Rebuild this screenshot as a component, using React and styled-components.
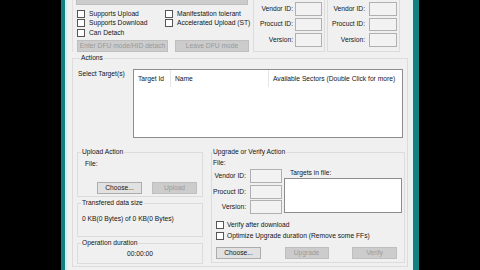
import React from 'react';
import styled, { createGlobalStyle } from 'styled-components';

const Global = createGlobalStyle`
  html, body { margin: 0; padding: 0; background: #000; }
  body { font-family: "Liberation Sans", Arial, sans-serif; }
`;

const Screen = styled.div`
  width: 480px;
  height: 270px;
  display: flex;
  overflow: hidden;
  background: #000;
`;

const Window = styled.div`
  margin-left: 61px;
  width: 358px;
  height: 270px;
  box-sizing: border-box;
  border-left: 4px solid #127f80;
  border-right: 6px solid #127f80;
  display: flex;
`;

const Frame = styled.div`
  flex: 1;
  border-left: 2px solid #d4ecec;
  border-right: 4px solid #e6f2f2;
  background: #f0f0f0;
  overflow: hidden;
  color: #141414;
  font-size: 6.7px;
  line-height: 8px;
`;

const Content = styled.div`
  margin-top: -14px;
  display: flex;
  flex-direction: column;
`;

const TopSection = styled.div`
  display: flex;
  height: 66px;
`;

const LeftPanel = styled.div`
  margin-left: 5px;
  width: 181px;
  box-sizing: border-box;
  border-left: 1px solid #e0e0e0;
  padding-left: 3px;
  display: flex;
  flex-direction: column;
`;

const Button = styled.button`
  box-sizing: border-box;
  width: ${p => p.$w}px;
  height: ${p => p.$h || 12}px;
  margin: 0;
  padding: 0;
  font-family: inherit;
  font-size: 6.7px;
  line-height: 8px;
  white-space: nowrap;
  overflow: hidden;
  border: 1px solid ${p => (p.disabled ? '#bfbfbf' : '#adadad')};
  background: ${p => (p.disabled ? '#cccccc' : '#e1e1e1')};
  color: ${p => (p.disabled ? '#9a9a9a' : '#141414')};
`;

const HiddenButton = styled(Button)`
  margin-top: 5px;
`;

const CheckGrid = styled.div`
  margin-top: 4px;
  padding-left: 1px;
  display: grid;
  grid-template-columns: 88px auto;
  grid-template-rows: repeat(3, 9.5px);
  grid-auto-flow: column;
`;

const CheckRow = styled.label`
  display: flex;
  align-items: center;
  gap: ${p => p.$gap || 4}px;
  white-space: nowrap;
  height: ${p => p.$h || 9.5}px;
`;

const Box = styled.span`
  display: inline-block;
  box-sizing: border-box;
  width: 8px;
  height: 8px;
  border: 1px solid #555;
  background: #fff;
  flex: none;
`;

const ButtonRow = styled.div`
  display: flex;
  gap: ${p => p.$gap || 0}px;
  justify-content: ${p => p.$justify || 'flex-start'};
  margin-top: ${p => p.$mt || 0}px;
  padding: ${p => p.$pad || '0'};
`;

const IdGroup = styled.div`
  box-sizing: border-box;
  width: ${p => p.$w}px;
  height: 66px;
  margin-left: ${p => p.$ml || 0}px;
  border: 1px solid #dcdcdc;
  padding: 15px 2px 0 1px;
  display: grid;
  grid-template-columns: ${p => p.$cols};
  column-gap: ${p => p.$cg}px;
  grid-auto-rows: 13.5px;
  row-gap: 2px;
  align-content: start;
`;

const FieldLabel = styled.span`
  text-align: right;
  align-self: center;
  white-space: nowrap;
`;

const Input = styled.span`
  display: block;
  box-sizing: border-box;
  border: 1px solid #b0b0b0;
  background: #f2f2f2;
`;

const Group = styled.fieldset`
  margin: ${p => p.$m || 0};
  padding: ${p => p.$pad || '0'};
  min-width: 0;
  box-sizing: border-box;
  border: 1px solid #dcdcdc;
  width: ${p => p.$w}px;
  height: ${p => p.$h}px;
  display: flex;
  flex-direction: column;
`;

const Legend = styled.legend`
  margin-left: ${p => p.$ml ?? 3}px;
  padding: 0 1px;
  font-size: 6.7px;
  line-height: 8px;
`;

const TargetRow = styled.div`
  display: flex;
  height: 69px;
`;

const TargetLabel = styled.div`
  width: 56px;
  box-sizing: border-box;
  padding: 1px 0 0 1px;
`;

const ListBox = styled.div`
  width: 270px;
  height: 69px;
  box-sizing: border-box;
  border: 1px solid #8c8c8c;
  background: #fff;
`;

const ListHeader = styled.div`
  display: flex;
  height: 17px;
`;

const HeaderCell = styled.div`
  box-sizing: border-box;
  width: ${p => (p.$w ? `${p.$w}px` : 'auto')};
  flex: ${p => (p.$w ? 'none' : '1')};
  display: flex;
  align-items: center;
  padding-left: 4px;
  border-right: ${p => (p.$last ? 'none' : '1px solid #e5e5e5')};
  white-space: nowrap;
`;

const BottomRow = styled.div`
  display: flex;
  gap: 8px;
  margin-top: 10px;
`;

const LeftCol = styled.div`
  width: 126px;
  display: flex;
  flex-direction: column;
  gap: 2px;
`;

const Text = styled.div`
  margin-top: ${p => p.$mt || 0}px;
  padding-left: ${p => p.$pl || 0}px;
  text-align: ${p => p.$align || 'left'};
  white-space: nowrap;
  height: ${p => (p.$h ? `${p.$h}px` : 'auto')};
`;

const FileRow = styled.div`
  display: flex;
  margin-top: 2px;
`;

const IdGrid = styled.div`
  display: grid;
  grid-template-columns: 34px 32px;
  column-gap: 4px;
  grid-auto-rows: 14px;
  row-gap: 1.5px;
`;

const TargetsCol = styled.div`
  margin-left: 2px;
  width: 118px;
  display: flex;
  flex-direction: column;
`;

const TargetsBox = styled.div`
  height: 35px;
  box-sizing: border-box;
  border: 1px solid #8c8c8c;
  background: #fff;
`;

const CheckList = styled.div`
  margin-top: 5px;
  padding-left: 4px;
  display: flex;
  flex-direction: column;
`;

function Check({ children, h, gap }) {
  return (
    <CheckRow $h={h} $gap={gap}>
      <Box />
      <span>{children}</span>
    </CheckRow>
  );
}

export default function App() {
  return (
    <>
      <Global />
      <Screen>
        <Window>
          <Frame>
            <Content>
              <TopSection>
                <LeftPanel>
                  <HiddenButton disabled $w={172} $h={14} />
                  <CheckGrid>
                    <Check>Supports Upload</Check>
                    <Check>Supports Download</Check>
                    <Check>Can Detach</Check>
                    <Check>Manifestation tolerant</Check>
                    <Check>Accelerated Upload (ST)</Check>
                  </CheckGrid>
                  <ButtonRow $gap={7} $mt={2.5} $pad="0 0 0 1px">
                    <Button disabled $w={91}>Enter DFU mode/HID detach</Button>
                    <Button disabled $w={74}>Leave DFU mode</Button>
                  </ButtonRow>
                </LeftPanel>
                <IdGroup $w={72} $cols="38px 27px" $cg={2}>
                  <FieldLabel>Vendor ID:</FieldLabel>
                  <Input />
                  <FieldLabel>Procuct ID:</FieldLabel>
                  <Input />
                  <FieldLabel>Version:</FieldLabel>
                  <Input />
                </IdGroup>
                <IdGroup $w={73} $ml={2} $cols="36px 28px" $cg={4}>
                  <FieldLabel>Vendor ID:</FieldLabel>
                  <Input />
                  <FieldLabel>Procuct ID:</FieldLabel>
                  <Input />
                  <FieldLabel>Version:</FieldLabel>
                  <Input />
                </IdGroup>
              </TopSection>

              <Group $w={336} $h={213} $m="2px 0 0 5px" $pad="7px 1px 2px 4px">
                <Legend>Actions</Legend>
                <TargetRow>
                  <TargetLabel>Select Target(s)</TargetLabel>
                  <ListBox>
                    <ListHeader>
                      <HeaderCell $w={37}>Target Id</HeaderCell>
                      <HeaderCell $w={98}>Name</HeaderCell>
                      <HeaderCell $last>Available Sectors (Double Click for more)</HeaderCell>
                    </ListHeader>
                  </ListBox>
                </TargetRow>

                <BottomRow>
                  <LeftCol>
                    <Group $w={126} $h={49}>
                      <Legend>Upload Action</Legend>
                      <Text $mt={4} $pl={7}>File:</Text>
                      <ButtonRow $mt={14} $gap={10} $justify="flex-end" $pad="0 5px 0 0">
                        <Button $w={45}>Choose...</Button>
                        <Button disabled $w={45}>Upload</Button>
                      </ButtonRow>
                    </Group>
                    <Group $w={126} $h={38}>
                      <Legend>Transfered data size</Legend>
                      <Text $mt={8} $pl={4}>0 KB(0 Bytes) of 0 KB(0 Bytes)</Text>
                    </Group>
                    <Group $w={126} $h={25}>
                      <Legend>Operation duration</Legend>
                      <Text $mt={3} $align="center">00:00:00</Text>
                    </Group>
                  </LeftCol>

                  <Group $w={194} $h={115}>
                    <Legend $ml={0}>Upgrade or Verify Action</Legend>
                    <Text $mt={3} $pl={1}>File:</Text>
                    <FileRow>
                      <IdGrid>
                        <FieldLabel>Vendor ID:</FieldLabel>
                        <Input />
                        <FieldLabel>Procuct ID:</FieldLabel>
                        <Input />
                        <FieldLabel>Version:</FieldLabel>
                        <Input />
                      </IdGrid>
                      <TargetsCol>
                        <Text $pl={6} $h={9}>Targets in file:</Text>
                        <TargetsBox />
                      </TargetsCol>
                    </FileRow>
                    <CheckList>
                      <Check h={11} gap={3}>Verify after download</Check>
                      <Check h={11} gap={3}>Optimize Upgrade duration (Remove some FFs)</Check>
                    </CheckList>
                    <ButtonRow $mt={6} $justify="space-between" $pad="0 7px 0 4px">
                      <Button $w={45}>Choose...</Button>
                      <Button disabled $w={44}>Upgrade</Button>
                      <Button disabled $w={45}>Verify</Button>
                    </ButtonRow>
                  </Group>
                </BottomRow>
              </Group>
            </Content>
          </Frame>
        </Window>
      </Screen>
    </>
  );
}
